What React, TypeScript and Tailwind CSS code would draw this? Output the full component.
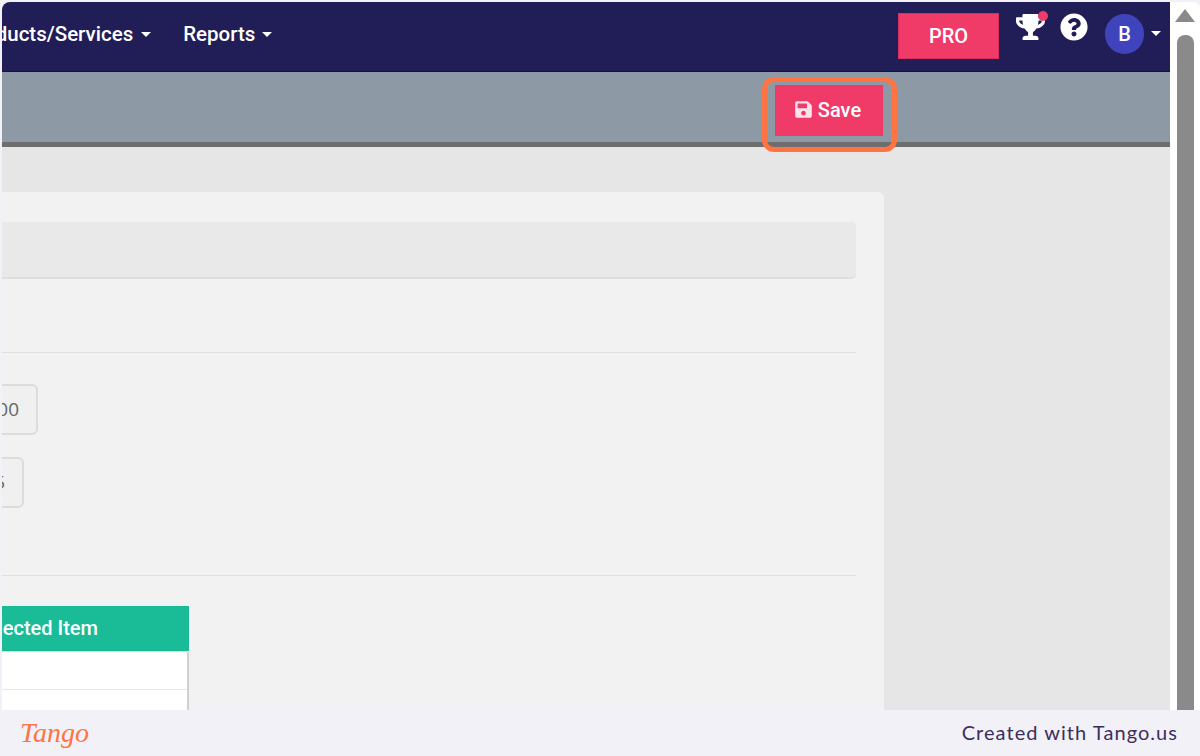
import React from "react";
import { FaSave, FaTrophy, FaQuestionCircle } from "react-icons/fa";

function Caret() {
  return <span className="inline-block w-0 h-0 border-x-[5px] border-x-transparent border-t-[5px] border-t-white" />;
}

export default function App() {
  return (
    <div className="w-[1200px] h-[756px] overflow-hidden flex flex-col bg-[#f3f1f8] pl-[2px] pt-[2px]" style={{ fontFamily: "Roboto, sans-serif" }}>
      <div className="h-[708px] flex shrink-0">
        <div className="w-[1168px] flex flex-col overflow-hidden rounded-tl-[8px] relative">
          <header className="h-[70px] shrink-0 bg-[#211d57] border-b border-[#15123f] flex items-start text-white">
            <nav className="flex items-center h-[64px] font-medium text-[20.5px] -ml-[38px]">
              <span className="flex items-center gap-[8px]">Products/Services <Caret /></span>
              <span className="flex items-center gap-[7px] ml-[32px]">Reports <Caret /></span>
            </nav>
            <div className="ml-auto flex items-start pr-[9px]">
              <button className="mt-[11px] w-[101px] h-[46px] bg-[#f03a68] border border-[#d92f5c] text-[20px] font-medium flex items-center justify-center">PRO</button>
              <span className="relative ml-[17px] mt-[11px] text-white">
                <FaTrophy className="w-[29px] h-[28px]" />
                <span className="absolute -top-[2px] right-[-3px] w-[10px] h-[10px] rounded-full bg-[#f03a68]" />
              </span>
              <FaQuestionCircle className="ml-[15px] mt-[11px] w-[28px] h-[28px]" />
              <span className="ml-[17px] mt-[12px] w-[39px] h-[40px] rounded-full bg-[#3f44bd] flex items-center justify-center font-medium text-[20px]">B</span>
              <span className="ml-[7px] mt-[29px] flex"><Caret /></span>
            </div>
          </header>
          <div className="h-[75px] shrink-0 bg-[#8d99a4] border-b-[5px] border-[#6e6e6e] flex justify-end items-start pr-[287px]">
            <div className="relative mt-[13px]">
              <button className="w-[108px] h-[51px] pr-[3px] pb-[2px] bg-[#f03a68] border border-[#ee3866] text-white text-[20px] font-medium flex items-center justify-center gap-[5px]">
                <FaSave className="w-[19px] h-[19px] text-[#fbe3ea]" />Save
              </button>
              <span className="absolute -left-[13px] -right-[14px] -top-[8px] -bottom-[16px] rounded-[12px] border-[5px] border-[#ff7442]" />
            </div>
          </div>
          <main className="flex-1 bg-[#e6e6e6] overflow-hidden pt-[45px]">
            <section className="-ml-[102px] w-[984px] h-[600px] bg-[#f2f2f2] rounded-tr-[6px] px-[28px] pt-[30px]">
              <div className="h-[57px] bg-[#e9e9e9] rounded-[5px] border-b-2 border-[#dfdfdf]" />
              <div className="mt-[73px] border-t border-[#e0e0e0] pt-[31px]">
                <div className="w-[110px] h-[51px] bg-[#f0f0f0] border-2 border-[#dcdcdc] rounded-[6px] flex items-center justify-end pr-[17px] text-[19px] text-[#666]" style={{ fontFamily: '"Open Sans", sans-serif' }}>100</div>
                <div className="mt-[22px] w-[96px] h-[51px] bg-[#f0f0f0] border-2 border-[#dcdcdc] rounded-[6px] flex items-center justify-end pr-[17px] text-[19px] text-[#666]" style={{ fontFamily: '"Open Sans", sans-serif' }}>5</div>
              </div>
              <div className="mt-[67px] border-t border-[#e0e0e0] pt-[30px]">
                <div className="w-[261px] h-[45px] pb-[2px] bg-[#19bc97] text-white text-[20px] font-medium flex items-center justify-end pr-[91px]">Selected Item</div>
                <div className="mt-[1px] w-[261px] bg-white border-r-2 border-[#d0d0d0] rounded-tr-[3px] shadow-[0_-1px_1px_rgba(0,0,0,0.1)]">
                  <div className="h-[38px] border-b border-[#e6e6e6]" />
                  <div className="h-[38px]" />
                </div>
              </div>
            </section>
          </main>
        </div>
        <aside className="w-[30px] bg-white flex flex-col items-start pl-[5px] rounded-tr-[6px]">
          <span className="mt-[7px] w-0 h-0 border-x-[10px] border-x-transparent border-b-[13px] border-b-[#8a8a8a]" />
          <span className="mt-[13px] ml-[2px] w-[17px] flex-1 bg-[#8a8a8a] rounded-t-[8px]" />
        </aside>
      </div>
      <footer className="h-[46px] shrink-0 flex items-center justify-between pl-[18px] pr-[22px]">
        <span className="text-[28px] leading-none italic text-[#ff7442] font-light" style={{ fontFamily: '"Liberation Serif", serif' }}>Tango</span>
        <span className="pb-[2px] text-[20px] tracking-[1.05px] text-[#3c2e5c]" style={{ fontFamily: 'Lato, sans-serif' }}>Created with Tango.us</span>
      </footer>
    </div>
  );
}
